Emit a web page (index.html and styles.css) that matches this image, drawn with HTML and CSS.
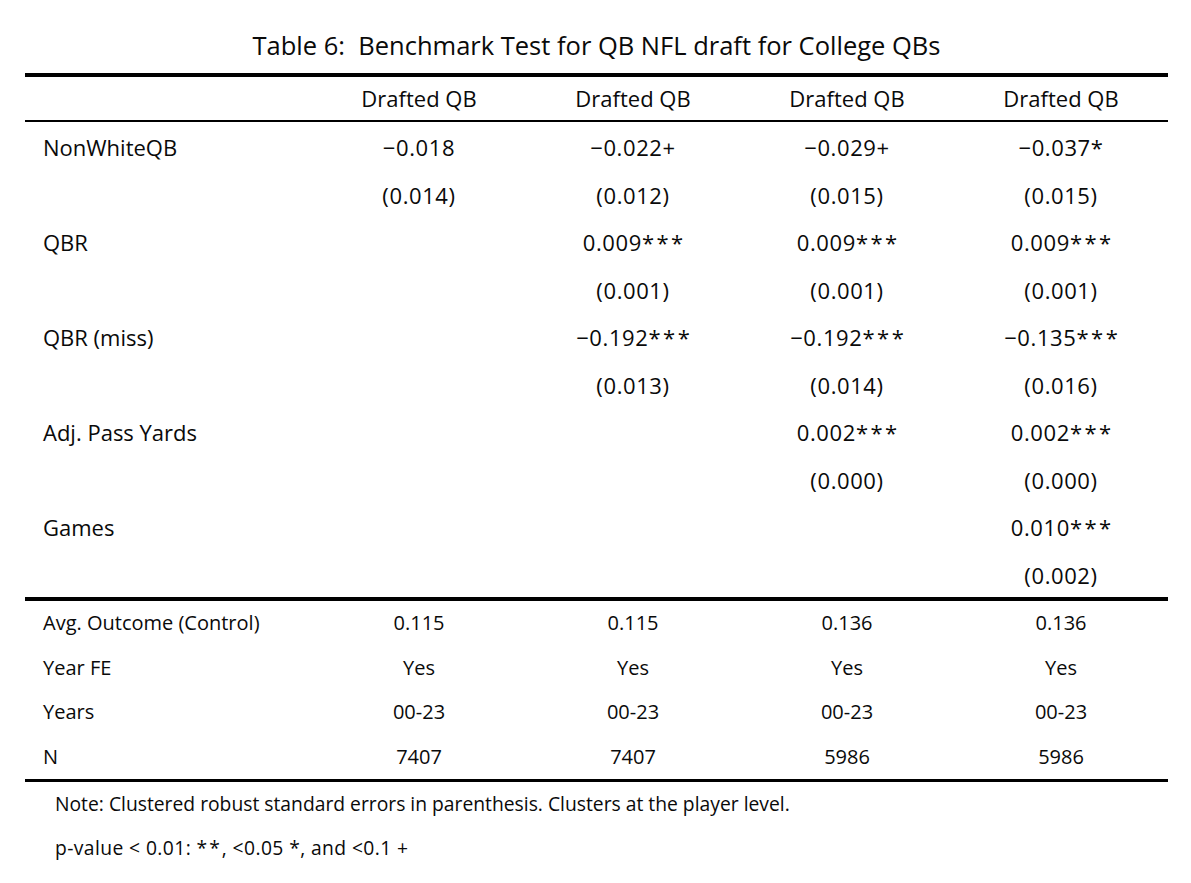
FILE: index.html
```html
<!DOCTYPE html>
<html lang="en">
<head>
<meta charset="utf-8">
<title>Table 6</title>
<link rel="stylesheet" href="styles.css">
</head>
<body>
<div class="page">
  <div class="caption">Table 6:&nbsp; Benchmark Test for QB NFL draft for College QBs</div>
  <table class="reg">
    <colgroup>
      <col class="c-label">
      <col class="c-val"><col class="c-val"><col class="c-val"><col class="c-val">
    </colgroup>
    <thead>
      <tr class="head">
        <th></th><th>Drafted QB</th><th>Drafted QB</th><th>Drafted QB</th><th>Drafted QB</th>
      </tr>
    </thead>
    <tbody class="coefs">
      <tr><td class="lbl">NonWhiteQB</td><td>−0.018</td><td>−0.022+</td><td>−0.029+</td><td>−0.037*</td></tr>
      <tr><td class="lbl"></td><td>(0.014)</td><td>(0.012)</td><td>(0.015)</td><td>(0.015)</td></tr>
      <tr><td class="lbl">QBR</td><td></td><td>0.009<span class="sig">***</span></td><td>0.009<span class="sig">***</span></td><td>0.009<span class="sig">***</span></td></tr>
      <tr><td class="lbl"></td><td></td><td>(0.001)</td><td>(0.001)</td><td>(0.001)</td></tr>
      <tr><td class="lbl">QBR (miss)</td><td></td><td>−0.192<span class="sig">***</span></td><td>−0.192<span class="sig">***</span></td><td>−0.135<span class="sig">***</span></td></tr>
      <tr><td class="lbl"></td><td></td><td>(0.013)</td><td>(0.014)</td><td>(0.016)</td></tr>
      <tr><td class="lbl">Adj. Pass Yards</td><td></td><td></td><td>0.002<span class="sig">***</span></td><td>0.002<span class="sig">***</span></td></tr>
      <tr><td class="lbl"></td><td></td><td></td><td>(0.000)</td><td>(0.000)</td></tr>
      <tr><td class="lbl">Games</td><td></td><td></td><td></td><td>0.010<span class="sig">***</span></td></tr>
      <tr><td class="lbl"></td><td></td><td></td><td></td><td>(0.002)</td></tr>
    </tbody>
    <tbody class="stats">
      <tr><td class="lbl">Avg. Outcome (Control)</td><td>0.115</td><td>0.115</td><td>0.136</td><td>0.136</td></tr>
      <tr><td class="lbl">Year FE</td><td>Yes</td><td>Yes</td><td>Yes</td><td>Yes</td></tr>
      <tr><td class="lbl">Years</td><td>00-23</td><td>00-23</td><td>00-23</td><td>00-23</td></tr>
      <tr><td class="lbl">N</td><td>7407</td><td>7407</td><td>5986</td><td>5986</td></tr>
    </tbody>
  </table>
  <div class="notes">
    <p class="note">Note: Clustered robust standard errors in parenthesis. Clusters at the player level.</p>
    <p class="note pval">p-value &lt; 0.01: <span class="nsig">**</span>, &lt;0.05 *, and &lt;0.1 +</p>
  </div>
</div>
</body>
</html>
```
FILE: styles.css
```css
html, body {
  margin: 0;
  padding: 0;
  background: #ffffff;
}

body {
  font-family: "Open Sans", "Liberation Sans", sans-serif;
  color: #0a0a0a;
}

.page {
  width: 1143px;
  margin-left: 25px;
  padding-top: 25px;
}

.caption {
  text-align: center;
  font-size: 25.5px;
  line-height: 40px;
  height: 40px;
  margin-bottom: 8px;
  white-space: nowrap;
}

.reg {
  width: 1143px;
  border-collapse: collapse;
  table-layout: fixed;
  border-top: 4px solid #000;
  border-bottom: 3px solid #000;
}

.c-label { width: 287px; }
.c-val { width: 214px; }

.reg th,
.reg td {
  padding: 0;
  text-align: center;
  font-weight: normal;
  white-space: nowrap;
}

.reg .lbl {
  text-align: left;
  padding-left: 18px;
}

.head th {
  font-size: 22px;
  height: 43px;
  line-height: 43px;
  border-bottom: 2px solid #000;
}

.coefs td {
  font-size: 22px;
  letter-spacing: 0.6px;
  height: 44.5px;
  line-height: 44.5px;
  padding-top: 3px;
}

.coefs td.lbl {
  letter-spacing: 0;
}

.sig {
  letter-spacing: 2.5px;
  margin-right: -2.5px;
}

.coefs tr:last-child td {
  border-bottom: 4px solid #000;
}

.stats td {
  font-size: 20px;
  height: 44.5px;
  line-height: 44.5px;
}

.notes {
  padding-left: 30px;
}

.note {
  margin: 0;
  font-size: 19.3px;
  line-height: 44px;
  white-space: nowrap;
}

.pval {
  letter-spacing: 0.4px;
  line-height: 46px;
  margin-top: -1px;
}

.nsig {
  letter-spacing: 2px;
}
```
